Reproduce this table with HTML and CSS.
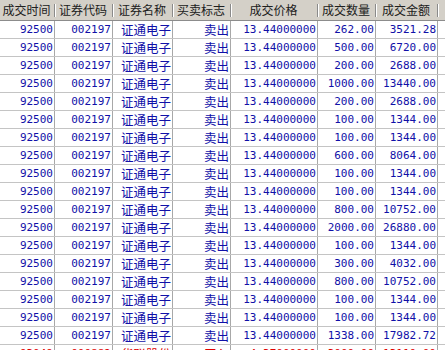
FILE: index.html
```html
<!DOCTYPE html>
<html>
<head>
<meta charset="utf-8">
<link rel="stylesheet" href="styles.css">
</head>
<body>
<div class="grid">
  <div class="hd">成交时间</div><div class="hd">证券代码</div><div class="hd">证券名称</div><div class="hd">买卖标志</div><div class="hd">成交价格</div><div class="hd">成交数量</div><div class="hd">成交金额</div><div class="hd end"></div>
</div>
<div class="body" id="body"></div>
<script>
const amounts=[["262.00","3521.28"],["500.00","6720.00"],["200.00","2688.00"],["1000.00","13440.00"],["200.00","2688.00"],["100.00","1344.00"],["100.00","1344.00"],["600.00","8064.00"],["100.00","1344.00"],["100.00","1344.00"],["800.00","10752.00"],["2000.00","26880.00"],["100.00","1344.00"],["300.00","4032.00"],["800.00","10752.00"],["100.00","1344.00"],["100.00","1344.00"],["1338.00","17982.72"]];
let h="";
for(const [q,a] of amounts){
  h+=`<div class="row"><div class="c n">92500</div><div class="c n">002197</div><div class="c z">证通电子</div><div class="c z">卖出</div><div class="c n">13.44000000</div><div class="c n">${q}</div><div class="c n">${a}</div><div class="c end"></div></div>`;
}
h+=`<div class="row red"><div class="c n">93049</div><div class="c n">000882</div><div class="c z">华联股份</div><div class="c z">买入</div><div class="c n">4.37000000</div><div class="c n">3000.00</div><div class="c n">13110.00</div><div class="c end"></div></div>`;
document.getElementById("body").innerHTML=h;
</script>
</body>
</html>
```
FILE: styles.css
```css
html, body {
  margin: 0;
  padding: 0;
  background: #ffffff;
  overflow: hidden;
  width: 445px;
  height: 350px;
}
.grid, .row {
  display: grid;
  grid-template-columns: 55px 58px 60px 58px 87px 58px 62px 1fr;
}
.grid {
  height: 20px;
  background: #d4d0c8;
  border-bottom: 1px solid #8c8c8c;
}
.hd {
  position: relative;
  font-family: "Noto Sans CJK SC", sans-serif;
  font-size: 12px;
  line-height: 20px;
  color: #202020;
  text-align: center;
  padding-right: 2px;
  white-space: nowrap;
}
.hd::after {
  content: "";
  position: absolute;
  right: 0;
  top: 4px;
  height: 13px;
  width: 1px;
  background: #8a8a8a;
  box-shadow: 1px 0 0 #ffffff;
}
.hd.end::after { display: none; }
.row {
  height: 17px;
  border-bottom: 1px solid #c4c4c4;
}
.c {
  border-right: 1px solid #a8a8a8;
  color: #1010a8;
  text-align: right;
  padding-right: 1px;
  white-space: nowrap;
  overflow: hidden;
  line-height: 17px;
}
.c.end { border-right: none; }
.n {
  font-family: "DejaVu Sans Mono", monospace;
  font-size: 11px;
}
.z {
  font-family: "Noto Sans CJK SC", sans-serif;
  font-size: 12.5px;
}
.red .c { color: #e00000; }
```
